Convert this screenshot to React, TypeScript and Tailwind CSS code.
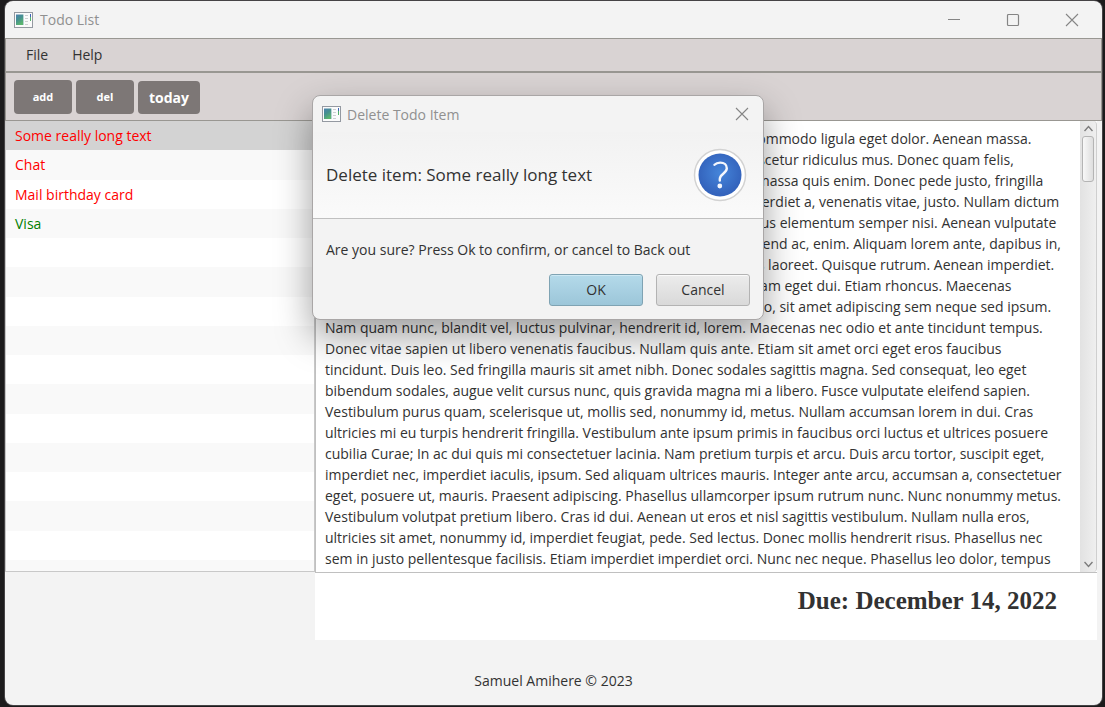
import type { ReactNode } from "react";

const ITEMS = [
  { id: 1, label: "Some really long text", tone: "text-[#ff0000]" },
  { id: 2, label: "Chat", tone: "text-[#ff0000]" },
  { id: 3, label: "Mail birthday card", tone: "text-[#ff0000]" },
  { id: 4, label: "Visa", tone: "text-[#008000]" },
];

const DETAILS = [
  "Lorem ipsum dolor sit amet, consectetuer adipiscing elit. Aenean commodo ligula eget dolor. Aenean massa.",
  "Cum sociis natoque penatibus et magnis dis parturient montes, nascetur ridiculus mus. Donec quam felis,",
  "ultricies nec, pellentesque eu, pretium quis, sem. Nulla consequat massa quis enim. Donec pede justo, fringilla",
  "vel, aliquet nec, vulputate eget, arcu. In enim justo, rhoncus ut, imperdiet a, venenatis vitae, justo. Nullam dictum",
  "felis eu pede mollis pretium. Integer tincidunt. Cras dapibus. Vivamus elementum semper nisi. Aenean vulputate",
  "eleifend tellus. Aenean leo ligula, porttitor eu, consequat vitae, eleifend ac, enim. Aliquam lorem ante, dapibus in,",
  "viverra quis, feugiat a, tellus. Phasellus viverra nulla ut metus varius laoreet. Quisque rutrum. Aenean imperdiet.",
  "Etiam ultricies nisi vel augue. Curabitur ullamcorper ultricies nisi. Nam eget dui. Etiam rhoncus. Maecenas",
  "tempus, tellus eget condimentum rhoncus, sem quam semper libero, sit amet adipiscing sem neque sed ipsum.",
  "Nam quam nunc, blandit vel, luctus pulvinar, hendrerit id, lorem. Maecenas nec odio et ante tincidunt tempus.",
  "Donec vitae sapien ut libero venenatis faucibus. Nullam quis ante. Etiam sit amet orci eget eros faucibus",
  "tincidunt. Duis leo. Sed fringilla mauris sit amet nibh. Donec sodales sagittis magna. Sed consequat, leo eget",
  "bibendum sodales, augue velit cursus nunc, quis gravida magna mi a libero. Fusce vulputate eleifend sapien.",
  "Vestibulum purus quam, scelerisque ut, mollis sed, nonummy id, metus. Nullam accumsan lorem in dui. Cras",
  "ultricies mi eu turpis hendrerit fringilla. Vestibulum ante ipsum primis in faucibus orci luctus et ultrices posuere",
  "cubilia Curae; In ac dui quis mi consectetuer lacinia. Nam pretium turpis et arcu. Duis arcu tortor, suscipit eget,",
  "imperdiet nec, imperdiet iaculis, ipsum. Sed aliquam ultrices mauris. Integer ante arcu, accumsan a, consectetuer",
  "eget, posuere ut, mauris. Praesent adipiscing. Phasellus ullamcorper ipsum rutrum nunc. Nunc nonummy metus.",
  "Vestibulum volutpat pretium libero. Cras id dui. Aenean ut eros et nisl sagittis vestibulum. Nullam nulla eros,",
  "ultricies sit amet, nonummy id, imperdiet feugiat, pede. Sed lectus. Donec mollis hendrerit risus. Phasellus nec",
  "sem in justo pellentesque facilisis. Etiam imperdiet imperdiet orci. Nunc nec neque. Phasellus leo dolor, tempus",
].join("\n");

function AppIcon() {
  return (
    <svg width="19" height="16" viewBox="0 0 19 16" aria-hidden="true">
      <defs>
        <linearGradient id="appIconFill" x1="0" y1="0" x2="0.5" y2="1">
          <stop offset="0" stopColor="#4c82b0" />
          <stop offset="0.5" stopColor="#45908f" />
          <stop offset="1" stopColor="#5bb56f" />
        </linearGradient>
      </defs>
      <rect x="0.5" y="0.5" width="18" height="15" fill="#fbfbfb" stroke="#9499a1" />
      <rect x="2" y="2.5" width="7" height="10.5" fill="url(#appIconFill)" />
      <path d="M9.5 2.5V13" stroke="#b9d3d3" />
      <path d="M11 3.5h3M11 6.5h3M11 9.5h3M11 12.5h3" stroke="#cdcfd2" />
      <rect x="16" y="2" width="1" height="3" fill="#3f62b5" />
      <rect x="16" y="5" width="1" height="4" fill="#55b36b" />
    </svg>
  );
}

function CloseGlyph() {
  return (
    <svg width="14" height="14" viewBox="0 0 14 14" fill="none" stroke="#858585" strokeWidth="1.1" aria-hidden="true">
      <path d="M1 1L13 13M13 1L1 13" />
    </svg>
  );
}

function ToolButton({ children, size }: { children: ReactNode; size: string }) {
  return (
    <button type="button" className={`flex items-center justify-center rounded bg-[#7d7776] font-bold text-white ${size}`}>
      {children}
    </button>
  );
}

function DeleteDialog() {
  return (
    <div
      role="dialog"
      aria-labelledby="dialog-title"
      className="absolute top-[95px] left-[312px] w-[452px] overflow-hidden rounded-lg border border-[#a9a6a6] bg-[#f3f3f3] shadow-[0_16px_36px_rgba(0,0,0,0.38)]"
    >
      <header className="flex h-[36px] items-center pr-3 pl-[9px]">
        <AppIcon />
        <h2 id="dialog-title" className="ml-[6px] text-[14px] text-[#909090]">
          Delete Todo Item
        </h2>
        <button type="button" aria-label="Close dialog" className="ml-auto p-[2px]">
          <CloseGlyph />
        </button>
      </header>
      <div className="flex h-[87px] items-center justify-between border-b border-[#c0c0c0] bg-linear-to-b from-[#f2f2f2] to-[#fafafa] pr-4 pl-[13px]">
        <p className="text-[17px]">Delete item: Some really long text</p>
        <svg width="54" height="54" viewBox="0 0 54 54" aria-hidden="true">
          <defs>
            <radialGradient id="helpFill" cx="0.5" cy="0.45" r="0.5">
              <stop offset="0" stopColor="#4585da" />
              <stop offset="1" stopColor="#3464bd" />
            </radialGradient>
          </defs>
          <circle cx="27" cy="27" r="25.5" fill="#ffffff" stroke="#d2d2d2" strokeWidth="1.5" />
          <circle cx="27" cy="27" r="21.5" fill="url(#helpFill)" />
          <path
            d="M21.5 16.8C23 15.2 25 14.6 27.2 14.6C31.2 14.6 33.8 16.8 33.8 20.2C33.8 25.6 26.8 25.8 26.8 31V32.6"
            fill="none"
            stroke="#f4f7fd"
            strokeWidth="2.4"
            strokeLinecap="round"
          />
          <circle cx="26.8" cy="38" r="2.4" fill="#f4f7fd" />
        </svg>
      </div>
      <div className="px-[13px] pt-[21px] pb-[13px]">
        <p className="text-[14px] leading-5">Are you sure? Press Ok to confirm, or cancel to Back out</p>
        <div className="mt-[14px] flex justify-end gap-[13px]">
          <button
            type="button"
            className="h-8 w-[94px] rounded-[3px] border border-[#7fa3b3] bg-linear-to-b from-[#b4daea] to-[#9cc6d9] pb-px text-[14px] shadow-[inset_0_1px_0_#cde8f3]"
          >
            OK
          </button>
          <button
            type="button"
            className="h-8 w-[94px] rounded-[3px] border border-[#b3b3b3] bg-linear-to-b from-[#ececec] to-[#d9d9d9] pb-px text-[14px] shadow-[inset_0_1px_0_#fafafa]"
          >
            Cancel
          </button>
        </div>
      </div>
    </div>
  );
}

export default function App() {
  return (
    <div className="flex min-h-screen flex-col bg-[#1c1b1c] pt-px pr-[3px] pb-[2px] pl-[5px] font-['Open_Sans','Noto_Sans',sans-serif] text-[#323232]">
      <div className="flex flex-1 flex-col overflow-hidden rounded-lg bg-[#f3f3f3] shadow-[0_0_0_1px_#454345]">
        <header className="flex h-[37px] items-center pr-[23px] pl-[9px]">
          <AppIcon />
          <h1 className="ml-[7px] text-[14px] text-[#909090]">Todo List</h1>
          <div className="ml-auto flex items-center gap-[45px]">
            <button type="button" aria-label="Minimize">
              <svg width="14" height="14" fill="none" stroke="#858585" aria-hidden="true">
                <path d="M1 6.5H13" />
              </svg>
            </button>
            <button type="button" aria-label="Maximize">
              <svg width="14" height="14" fill="none" stroke="#858585" strokeWidth="1.2" aria-hidden="true">
                <rect x="1.5" y="1.5" width="11" height="11" rx="1" />
              </svg>
            </button>
            <button type="button" aria-label="Close">
              <CloseGlyph />
            </button>
          </div>
        </header>

        <nav className="flex h-[34px] items-center gap-6 border border-[#999792] bg-[#d9d3d3] px-5 pb-[2px] text-[14px]">
          <button type="button">File</button>
          <button type="button">Help</button>
        </nav>

        <div className="flex h-[49px] items-end gap-1 border border-[#999792] bg-[#d9d3d3] px-2 pb-[6px]">
          <ToolButton size="h-[34px] w-[58px] text-[11px]">add</ToolButton>
          <ToolButton size="h-[34px] w-[58px] text-[11px]">del</ToolButton>
          <ToolButton size="h-[33px] w-[62px] pb-px text-[14px]">today</ToolButton>
        </div>

        <main className="flex flex-1">
          <section className="w-[310px] shrink-0">
            <ul className="flex h-[451px] flex-col overflow-hidden border-r border-b border-l border-[#c8c8c8] text-[14px]">
              {Array.from({ length: 15 }, (_, row) => {
                const item = ITEMS[row];
                const fill = row === 0 ? "bg-[#d3d3d3]" : row % 2 ? "bg-[#f9f9f9]" : "bg-white";
                return (
                  <li key={row} className={`flex flex-1 items-center px-[9px] ${fill} ${item ? item.tone : ""}`}>
                    {item?.label}
                  </li>
                );
              })}
              <li className="h-[11px] bg-[#f9f9f9]" />
            </ul>
          </section>

          <section className="mr-[5px] flex min-w-0 flex-1 flex-col">
            <div className="flex h-[452px] overflow-hidden border-b border-l border-[#c0c0c0] bg-white">
              <textarea
                aria-label="Item details"
                readOnly
                wrap="off"
                value={DETAILS}
                className="min-w-0 flex-1 resize-none overflow-hidden pt-[7px] pl-[9px] text-[14px] leading-[21px] outline-none"
              />
              <div className="flex w-[17px] flex-col items-center rounded-r-sm border-r border-[#cfcfcf] bg-linear-to-r from-[#e2e2e2] to-[#efefef] py-1" aria-hidden="true">
                <svg width="9" height="7" fill="none" stroke="#7c7c7c" strokeWidth="1.4">
                  <path d="M0.5 6L4.5 1.5L8.5 6" />
                </svg>
                <div className="mt-1 h-[46px] w-3 rounded-[3px] border border-[#b4b4b4] bg-linear-to-r from-[#f8f8f8] to-[#dedede]" />
                <svg className="mt-auto" width="9" height="7" fill="none" stroke="#7c7c7c" strokeWidth="1.4">
                  <path d="M0.5 1L4.5 5.5L8.5 1" />
                </svg>
              </div>
            </div>
            <div className="flex h-[67px] justify-end bg-white pt-3 pr-10">
              <p className="font-['Liberation_Serif','Times_New_Roman',serif] text-[25px] leading-8 font-bold">Due: December 14, 2022</p>
            </div>
          </section>
        </main>

        <footer className="flex h-[50px] items-center justify-center text-[14px]">Samuel Amihere © 2023</footer>
      </div>

      <DeleteDialog />
    </div>
  );
}
